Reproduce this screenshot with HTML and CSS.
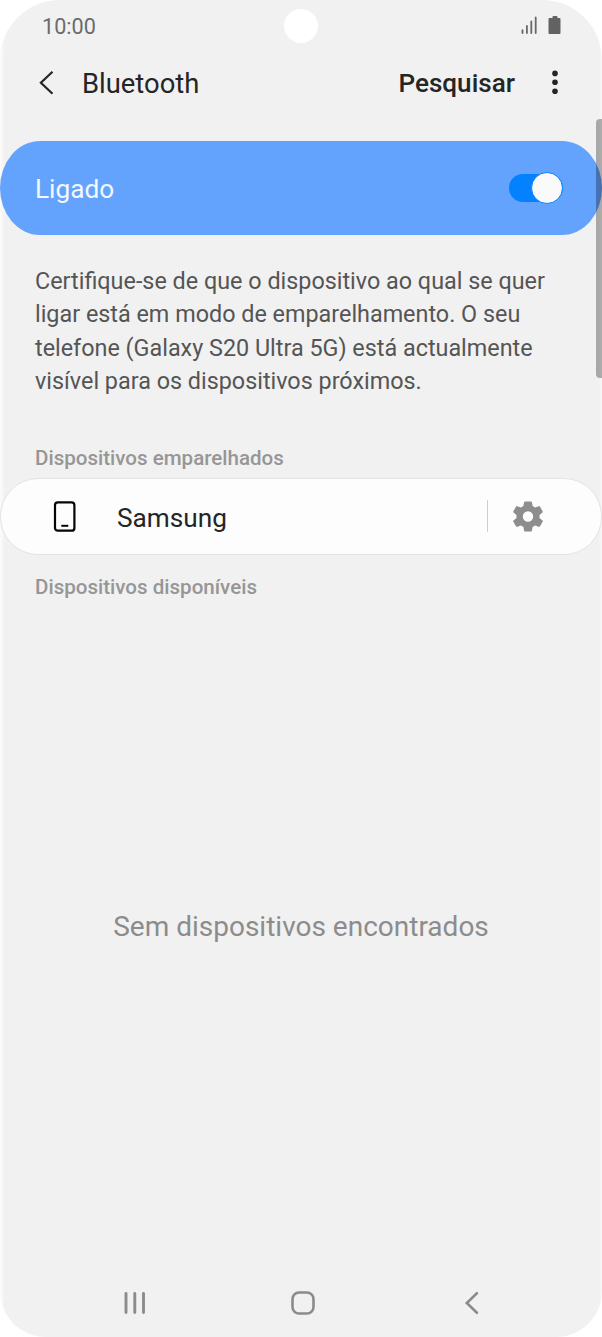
FILE: index.html
```html
<!DOCTYPE html>
<html lang="pt">
<head>
<meta charset="utf-8">
<title>Bluetooth</title>
<link rel="stylesheet" href="styles.css">
</head>
<body>
<div class="phone">
  <div class="status">
    <span class="time">10:00</span>
    <span class="camera"></span>
    <svg class="status-icons" width="42" height="20" viewBox="0 0 42 20">
      <path d="M2.500 14.200V17M6.900 10V17M11.300 5.500V17M15.700 1.500V17" stroke="#686868" stroke-width="1.800" stroke-linecap="round"/>
      <path d="M32.500 1q0-1 1-1h3q1 0 1 1v1h2q1 0 1 1v14q0 1-1 1h-10q-1 0-1-1V3q0-1 1-1h3z" fill="#626262"/>
    </svg>
  </div>
  <header class="header">
    <svg class="back" width="18" height="26" viewBox="0 0 18 26"><path d="M15.500 1.700L3.900 12.700l11.600 11" fill="none" stroke="#252525" stroke-width="2.200"/></svg>
    <h1 class="title">Bluetooth</h1>
    <span class="search">Pesquisar</span>
    <svg class="more" width="8" height="26" viewBox="0 0 8 26" fill="#252525"><circle cx="4" cy="3.400" r="2.800"/><circle cx="4" cy="12.300" r="2.800"/><circle cx="4" cy="21.300" r="2.800"/></svg>
  </header>
  <section class="power">
    <span class="power-label">Ligado</span>
    <span class="toggle"><span class="knob"></span></span>
  </section>
  <p class="info">Certifique-se de que o dispositivo ao qual se quer<br>ligar está em modo de emparelhamento. O seu<br>telefone (Galaxy S20 Ultra 5G) está actualmente<br>visível para os dispositivos próximos.</p>
  <h2 class="section paired">Dispositivos emparelhados</h2>
  <div class="device">
    <svg class="device-icon" width="23" height="32" viewBox="0 0 23 32" fill="none" stroke="#050505"><rect x="2" y="2.300" width="19.400" height="28.400" rx="2.800" stroke-width="2.200"/><path d="M8.300 25.800h7" stroke-width="2"/></svg>
    <span class="device-name">Samsung</span>
    <span class="divider"></span>
    <svg class="gear" width="30" height="31" viewBox="0 0 30 31"><path fill="#8d8d8d" fill-rule="evenodd" d="M12 .5h6q.8 0 .9.8l.7 3.8 2.500 1.500 3.700-1.400q.7-.3 1.100.4l2.800 4.900q.4.7-.2 1.100l-3 2.500v2.800l3 2.500q.6.4.2 1.100l-2.800 4.900q-.4.7-1.100.4l-3.700-1.400-2.500 1.500-.7 3.800q-.1.8-.9.8h-6q-.8 0-.9-.8l-.7-3.800-2.500-1.500-3.700 1.400q-.7.3-1.100-.4L.3 20.500q-.4-.7.2-1.100l3-2.500v-2.800l-3-2.500q-.6-.4-.2-1.100l2.800-4.900q.4-.7 1.100-.4l3.700 1.400 2.500-1.500.7-3.800q.1-.8.9-.8zM15 10.300a5.200 5.200 0 1 0 0 10.400 5.200 5.200 0 0 0 0-10.400z"/></svg>
  </div>
  <h2 class="section available">Dispositivos disponíveis</h2>
  <div class="empty">Sem dispositivos encontrados</div>
  <nav class="nav">
    <svg width="24" height="26" viewBox="0 0 24 26"><path d="M3 3.500v19M11.800 3.500v19M20.500 3.500v19" stroke="#8b8b8b" stroke-width="2.900" stroke-linecap="round"/></svg>
    <svg class="home" width="26" height="26" viewBox="0 0 26 26"><rect x="2.500" y="2.500" width="21" height="21" rx="6.500" fill="none" stroke="#8b8b8b" stroke-width="2.600"/></svg>
    <svg width="18" height="26" viewBox="0 0 18 26"><path d="M13.900 3.200L3.800 13l10.100 9.800" fill="none" stroke="#8b8b8b" stroke-width="2.600" stroke-linecap="round"/></svg>
  </nav>
  <div class="scrollbar"></div>
</div>
</body>
</html>
```
FILE: styles.css
```css
* { box-sizing: border-box; }
body { margin: 0; background: #fff; font-family: Roboto, sans-serif; }
svg { display: block; flex: none; }
.phone {
  position: relative;
  display: flex;
  flex-direction: column;
  width: 602px;
  height: 1337px;
  overflow: hidden;
  border-radius: 60px 60px 46px 46px;
  background: linear-gradient(90deg, #fcfcfc 0, #f1f1f1 5px, #f1f1f1 599px, #f8f8f8 602px);
}
.status {
  display: grid;
  grid-template-columns: 242px 34px 1fr;
  align-items: center;
  height: 52px;
  padding: 0 40px 0 42px;
}
.time { padding-top: 2px; font-size: 21.600px; line-height: 26px; color: #6b6b6b; }
.camera { width: 34px; height: 34px; border-radius: 50%; background: #fff; }
.status-icons { justify-self: end; }
.header { display: flex; align-items: center; height: 62px; padding: 0 43px 0 37px; color: #252525; }
.title { margin: 0 auto 0 27px; padding-top: 2px; font-size: 27.400px; line-height: 32px; font-weight: 400; }
.search { font-size: 26.100px; line-height: 32px; font-weight: 500; }
.more { margin-left: 36px; }
.power {
  display: flex;
  align-items: center;
  justify-content: space-between;
  height: 94px;
  margin-top: 27px;
  padding: 0 39px 0 35px;
  border-radius: 40px / 47px;
  background: #63a3fd;
}
.power-label { padding-top: 2px; font-size: 26.200px; line-height: 32px; color: #f3f8ff; }
.toggle {
  display: flex;
  align-items: center;
  justify-content: flex-end;
  width: 54px;
  height: 28px;
  border-radius: 14px;
  background: #0381fe;
}
.knob { width: 32px; height: 32px; flex: none; border: 1.500px solid #0381fe; border-radius: 50%; background: #fafafa; }
.info { margin: 30px 0 0 35px; font-size: 23.360px; line-height: 33.400px; color: #555; white-space: nowrap; }
.section { margin: 0 0 0 35px; font-size: 20.560px; line-height: 24px; font-weight: 500; color: #969696; }
.paired { margin-top: 47px; }
.device {
  display: flex;
  align-items: center;
  height: 77px;
  margin-top: 8px;
  padding: 0 58.500px 0 52px;
  border: 1px solid #e3e3e3;
  border-radius: 38px;
  background: #fdfdfd;
}
.device-name { margin: 0 auto 0 41px; padding-top: 3px; font-size: 26.200px; line-height: 32px; color: #252525; }
.divider { width: 1px; height: 32px; margin-right: 25px; background: #cfcfcf; }
.available { margin-top: 20px; }
.empty { margin-top: 311px; text-align: center; font-size: 28px; line-height: 34px; color: #8c8c8c; }
.nav { display: flex; justify-content: space-between; margin-top: auto; padding: 0 121px 21px 123px; }
.home { margin-right: 5px; }
.scrollbar {
  position: absolute;
  top: 119px;
  right: 0;
  width: 6px;
  height: 259px;
  border-radius: 4px 0 0 4px;
  background: rgba(0, 0, 0, .3);
}
```
